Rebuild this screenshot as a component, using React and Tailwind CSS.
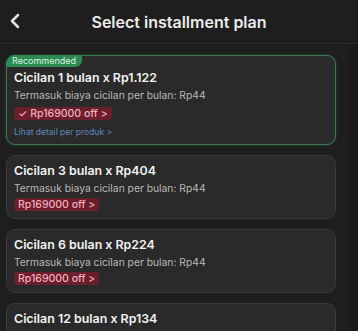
import { FiChevronLeft } from "react-icons/fi";

const plans = [
  { months: 1, amount: "Rp1.122", recommended: true },
  { months: 3, amount: "Rp404" },
  { months: 6, amount: "Rp224" },
  { months: 12, amount: "Rp134" },
];

const PlanCard = ({ months, amount, recommended }) => (
  <div
    className={`relative rounded-[9px] border bg-[#2a2a2a] px-[7px] ${
      recommended
        ? "border-[#3d7a52] pt-[13px] pb-[6px] shadow-[0_0_3px_rgba(60,130,85,0.5)]"
        : "border-[#3a3a3a] pt-[6px] pb-[7px]"
    }`}
  >
    {recommended && (
      <div className="absolute -left-px -top-px rounded-tl-[9px] rounded-br-[7px] bg-[#2c8a52] px-[6px] text-[9px] leading-[12px] text-[#d8f5e2]">
        Recommended
      </div>
    )}
    <div className="text-[12.4px] font-semibold leading-[18px] text-[#f2f2f2]">
      Cicilan {months} bulan x {amount}
    </div>
    <div className="mt-px text-[10.3px] leading-[14px] text-[#b8b8b8]">
      Termasuk biaya cicilan per bulan: Rp44
    </div>
    <div className={`flex ${recommended ? "mt-[5px]" : "mt-[3px]"}`}>
      <div className="flex items-center rounded-[3px] bg-[#6a1f2d] px-[4px] text-[10.5px] font-medium leading-[13px] text-[#f7aebd]">
        {recommended && <span className="mr-[3px]">✓</span>}
        Rp169000 off &gt;
      </div>
    </div>
    {recommended && (
      <div className="mt-[6px] text-[8.5px] leading-[12px] text-[#5f87bb]">
        Lihat detail per produk &gt;
      </div>
    )}
  </div>
);

export default function App() {
  return (
    <div
      className="h-[331px] w-[358px] overflow-hidden bg-[#1e1e1e]"
      style={{ fontFamily: "Inter, 'Noto Sans', sans-serif" }}
    >
      <div className="relative flex h-[44px] items-center justify-center border-b border-[#2b2b2b]">
        <FiChevronLeft
          className="absolute left-[3px] top-[9px] text-[#e6e6e6]"
          size={24}
          strokeWidth={2.5}
        />
        <div className="text-[16px] font-semibold text-[#ececec]">
          Select installment plan
        </div>
      </div>
      <div className="flex">
        <div className="flex w-[336px] flex-col gap-[10px] pl-[6px] pt-[11px]">
          {plans.map((p) => (
            <PlanCard key={p.months} {...p} />
          ))}
        </div>
        <div className="ml-auto w-[8px] bg-[#1a1a1a]" />
      </div>
    </div>
  );
}
